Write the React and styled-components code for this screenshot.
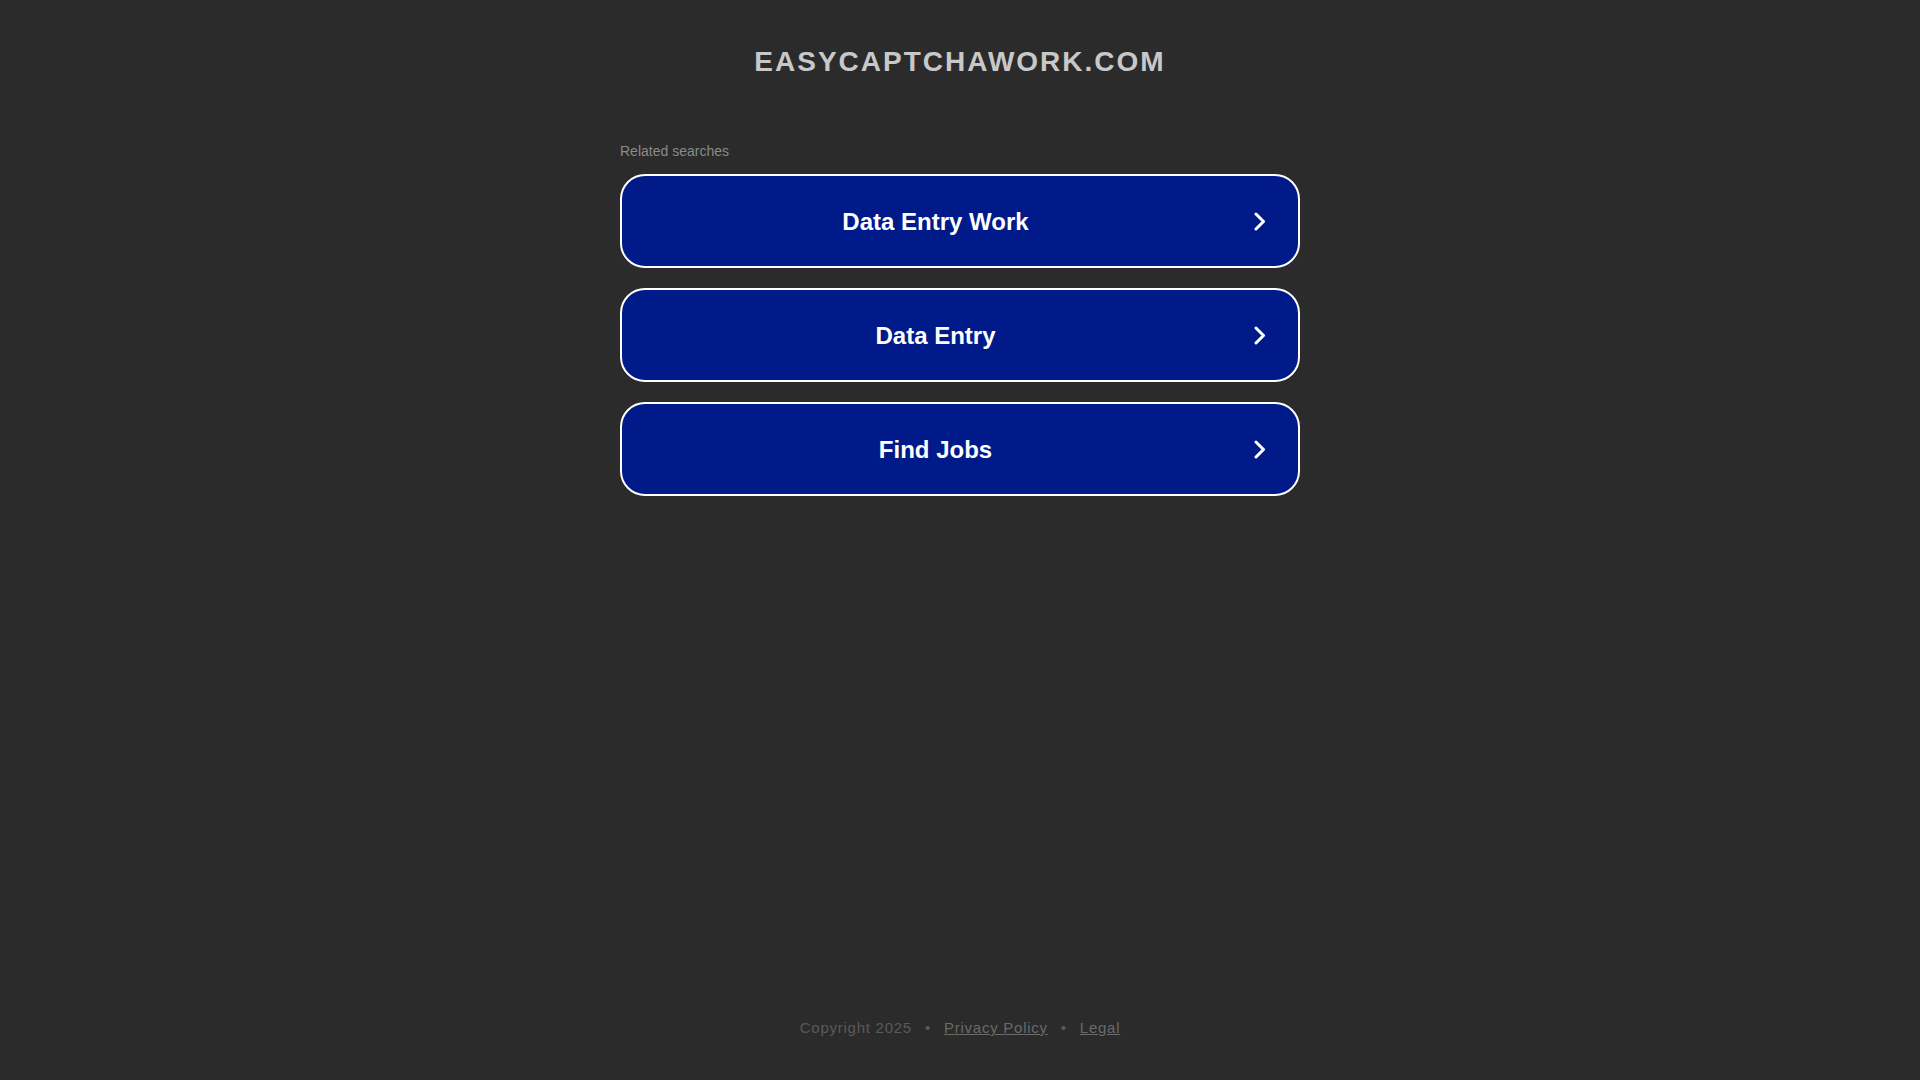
import React from 'react';
import styled, { createGlobalStyle } from 'styled-components';

const GlobalStyle = createGlobalStyle`
    html, body{
        margin: 0;
        padding: 0;
        background: #2b2b2b;
    }
    body{
        font-family: "Liberation Sans", Arial, sans-serif;
    }
`;

const searches = ["Data Entry Work", "Data Entry", "Find Jobs"];

const Chevron = () => (
    <svg width="12" height="19" viewBox="0 0 12 19" fill="none">
        <path d="M2 2 L9.5 9.5 L2 17" stroke="#ffffff" strokeWidth="3" strokeLinecap="round" strokeLinejoin="round" />
    </svg>
);

export default function App(){
    return (
        <Page>
            <GlobalStyle />
            <Title>EASYCAPTCHAWORK.COM</Title>
            <Results>
                <Label>Related searches</Label>
                {searches.map(item => (
                    <SearchButton key={item} href="#">
                        <span>{item}</span>
                        <Chevron />
                    </SearchButton>
                ))}
            </Results>
            <Footer>
                <span>Copyright 2025</span>
                <Dot>•</Dot>
                <FooterLink href="#">Privacy Policy</FooterLink>
                <Dot>•</Dot>
                <FooterLink href="#">Legal</FooterLink>
            </Footer>
        </Page>
    );
}

const Page = styled.div`
    min-height: 100vh;
    display: flex;
    flex-direction: column;
    align-items: center;
    box-sizing: border-box;
`;

const Title = styled.h1`
    margin: 0;
    padding-top: 46px;
    font-size: 28px;
    line-height: 32px;
    font-weight: bold;
    letter-spacing: 2px;
    color: #c8c8c8;
`;

const Results = styled.div`
    width: 680px;
    margin-top: 65px;
    display: flex;
    flex-direction: column;
`;

const Label = styled.div`
    font-size: 14px;
    line-height: 16px;
    color: #8a8a8a;
    margin-bottom: 15px;
`;

const SearchButton = styled.a`
    display: flex;
    align-items: center;
    box-sizing: border-box;
    height: 94px;
    margin-bottom: 20px;
    padding: 2px 32px 0 34px;
    border: 2px solid #ffffff;
    border-radius: 25px;
    background: #011a8a;
    color: #ffffff;
    text-decoration: none;
    font-size: 24px;
    font-weight: bold;
    span{
        flex: 1;
        text-align: center;
        margin-right: 39px;
    }
    svg{
        flex-shrink: 0;
        margin-top: -2px;
    }
`;

const Footer = styled.footer`
    margin-top: auto;
    padding-bottom: 43px;
    display: flex;
    align-items: center;
    gap: 13px;
    font-size: 15px;
    line-height: 18px;
    letter-spacing: 0.75px;
    color: #5a5a5a;
`;

const Dot = styled.span`
    color: #5a5a5a;
`;

const FooterLink = styled.a`
    color: #6a6a6a;
    text-decoration: underline;
`;
